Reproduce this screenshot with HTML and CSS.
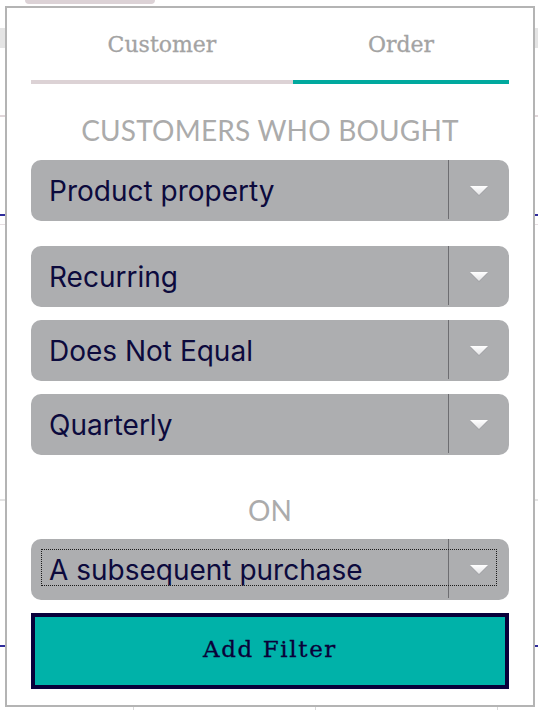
FILE: index.html
```html
<!DOCTYPE html>
<html lang="en">
<head>
<meta charset="utf-8">
<title>Filter</title>
<link rel="stylesheet" href="styles.css">
</head>
<body>
<div class="page">
  <div class="pill"></div>
  <div class="band"></div>
  <div class="rule rule-pink"></div>
  <div class="rule rule-blue"></div>
  <div class="rule rule-light"></div>
  <div class="rule rule-grey"></div>
  <div class="rule rule-blue2"></div>
  <div class="ticks"><span class="tick"></span><span class="tick"></span><span class="tick"></span></div>
</div>

<div class="panel">
  <div class="tabs">
    <div class="tab tab-customer">Customer</div>
    <div class="tab tab-order is-active">Order</div>
  </div>

  <div class="label label-head">CUSTOMERS WHO BOUGHT</div>

  <div class="select select-first">
    <span class="select-value">Product property</span>
    <span class="select-toggle"><svg class="arrow" width="22" height="13" viewBox="0 0 22 13"><defs><linearGradient id="ag1" x1="0" y1="0" x2="0" y2="1"><stop offset="0" stop-color="#ffffff"/><stop offset="1" stop-color="#e4e4e6"/></linearGradient></defs><path d="M2 2.5 H20 L11 11.5 Z" fill="#9c9da0" opacity="0.6" transform="translate(0 0.8)"/><path d="M2 2 H20 L11 11 Z" fill="url(#ag1)"/></svg></span>
  </div>

  <div class="select select-gap">
    <span class="select-value">Recurring</span>
    <span class="select-toggle"><svg class="arrow" width="22" height="13" viewBox="0 0 22 13"><path d="M2 2.5 H20 L11 11.5 Z" fill="#9c9da0" opacity="0.6" transform="translate(0 0.8)"/><path d="M2 2 H20 L11 11 Z" fill="url(#ag1)"/></svg></span>
  </div>

  <div class="select">
    <span class="select-value">Does Not Equal</span>
    <span class="select-toggle"><svg class="arrow" width="22" height="13" viewBox="0 0 22 13"><path d="M2 2.5 H20 L11 11.5 Z" fill="#9c9da0" opacity="0.6" transform="translate(0 0.8)"/><path d="M2 2 H20 L11 11 Z" fill="url(#ag1)"/></svg></span>
  </div>

  <div class="select">
    <span class="select-value">Quarterly</span>
    <span class="select-toggle"><svg class="arrow" width="22" height="13" viewBox="0 0 22 13"><path d="M2 2.5 H20 L11 11.5 Z" fill="#9c9da0" opacity="0.6" transform="translate(0 0.8)"/><path d="M2 2 H20 L11 11 Z" fill="url(#ag1)"/></svg></span>
  </div>

  <div class="label label-on">ON</div>

  <div class="select select-focus">
    <span class="select-value">A subsequent purchase</span>
    <span class="select-toggle"><svg class="arrow" width="22" height="13" viewBox="0 0 22 13"><path d="M2 2.5 H20 L11 11.5 Z" fill="#9c9da0" opacity="0.6" transform="translate(0 0.8)"/><path d="M2 2 H20 L11 11 Z" fill="url(#ag1)"/></svg></span>
    <span class="focus-ring"></span>
  </div>

  <button class="add-btn" type="button">Add Filter</button>
</div>
</body>
</html>
```

FILE: styles.css
```css
html, body {
  margin: 0;
  padding: 0;
  background: #ffffff;
}

body {
  width: 538px;
  height: 710px;
  overflow: hidden;
  position: relative;
  font-family: "Inter", "Liberation Sans", sans-serif;
}

/* ---------- backdrop (page behind the popover) ---------- */
.page {
  display: flex;
  flex-direction: column;
}

.pill {
  margin-left: 25px;
  width: 130px;
  height: 4px;
  background: #dcd2d6;
  border-radius: 0 0 6px 6px;
}

.band {
  margin-top: 24px;
  height: 20px;
  background: #e4e4e4;
}

.rule { height: 2px; }

.rule-pink {
  margin-top: 67px;
  background: #e0d6d9;
}

.rule-blue {
  margin-top: 97px;
  background: #2f2c9c;
}

.rule-light {
  margin-top: 8px;
  height: 1px;
  background: #e6dee1;
}

.rule-grey {
  margin-top: 274px;
  background: #e3e3e3;
}

.rule-blue2 {
  margin-top: 144px;
  background: #2f2c9c;
}

.ticks {
  margin-top: 59px;
  height: 4px;
  display: flex;
  padding-left: 133px;
  gap: 181px;
}

.tick {
  width: 1px;
  height: 4px;
  background: #d9d9d9;
}

/* ---------- popover panel ---------- */
.panel {
  position: absolute;
  left: 5px;
  top: 6px;
  width: 530px;
  box-sizing: border-box;
  background: #ffffff;
  border: 2px solid #b4b4b4;
  padding: 0 24px 16px;
  display: flex;
  flex-direction: column;
}

.tabs {
  display: grid;
  grid-template-columns: 262px 1fr;
}

.tab {
  font-family: "DejaVu Serif", "Liberation Serif", serif;
  font-size: 22px;
  line-height: 30px;
  color: #a3a3a3;
  text-align: center;
  padding: 22px 0 20px;
  border-bottom: 4px solid #dcd2d5;
  -webkit-text-stroke: 0.3px #a3a3a3;
}

.tab.is-active {
  border-bottom-color: #00a99e;
}

.label {
  font-family: "Lato", "Noto Sans", sans-serif;
  font-size: 28px;
  letter-spacing: 0.2px;
  line-height: 32px;
  color: #ababab;
  text-align: center;
}

.label-head {
  margin: 30px 0 14px;
}

.label-on {
  margin: 39px 0 13px;
}

/* ---------- select boxes ---------- */
.select {
  position: relative;
  display: flex;
  height: 61px;
  background: #adaeb0;
  border-radius: 10px;
  margin-top: 13px;
}

.select-first,
.label + .select {
  margin-top: 0;
}

.select-gap {
  margin-top: 25px;
}

.select-value {
  flex: 1;
  display: flex;
  align-items: center;
  padding-left: 18px;
  font-family: "Inter", "Liberation Sans", sans-serif;
  font-size: 28px;
  color: #0c0a3d;
  white-space: nowrap;
}

.select-toggle {
  width: 61px;
  height: 59px;
  border-left: 1px solid #6d6d71;
  display: flex;
  align-items: center;
  justify-content: center;
  padding-top: 2px;
  box-sizing: border-box;
}

.arrow {
  display: block;
}

.focus-ring {
  position: absolute;
  left: 10px;
  top: 10px;
  right: 12px;
  bottom: 14px;
  border: 1px dotted #1a1a1a;
  pointer-events: none;
}

/* ---------- button ---------- */
.add-btn {
  margin-top: 13px;
  height: 76px;
  box-sizing: border-box;
  background: #00b2a9;
  border: 4px solid #08003a;
  border-radius: 0;
  padding: 0 0 4px;
  font-family: "DejaVu Serif", "Liberation Serif", serif;
  font-size: 23px;
  letter-spacing: 1.6px;
  line-height: 30px;
  color: #0a0038;
  text-align: center;
  cursor: pointer;
  -webkit-text-stroke: 0.3px #0a0038;
}
```
